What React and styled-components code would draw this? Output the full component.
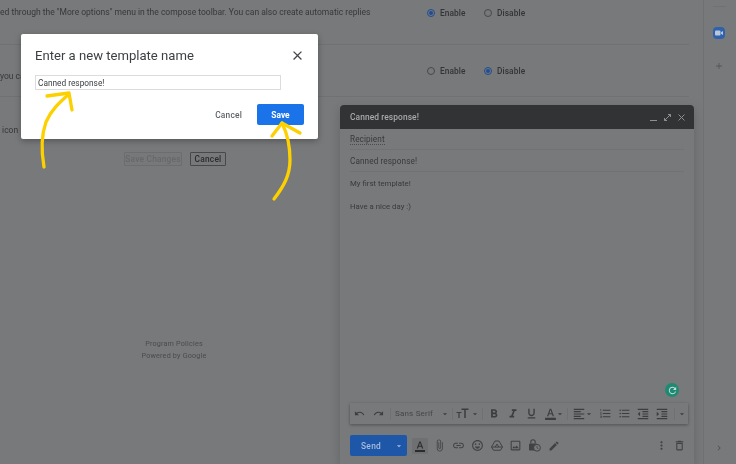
import React from "react";
import styled, { createGlobalStyle } from "styled-components";
import {
  MdUndo, MdRedo, MdArrowDropDown, MdFormatBold, MdFormatItalic, MdFormatUnderlined,
  MdFormatColorText, MdFormatAlignLeft, MdFormatListNumbered, MdFormatListBulleted,
  MdFormatIndentDecrease, MdFormatIndentIncrease, MdAttachFile, MdInsertLink,
  MdOutlineEmojiEmotions, MdOutlineImage,
  MdEdit, MdMoreVert, MdOutlineDelete, MdClose, MdAdd, MdChevronRight,
  MdRefresh,
} from "react-icons/md";

const Global = createGlobalStyle`
  html, body { margin: 0; padding: 0; background: #78797b; }
  * { box-sizing: border-box; }
  body { font-family: Roboto, "Liberation Sans", sans-serif; overflow: hidden; }
`;

const Page = styled.div`
  position: relative; width: 736px; height: 464px; display: flex; overflow: hidden;
  background: #78797b; color: #333436; filter: blur(0.35px);
`;
const Main = styled.main`
  width: 703px; display: flex; flex-direction: column; padding-right: 14px;
`;
const SettingRow = styled.div`
  height: ${(p) => p.$h}px; padding-top: ${(p) => p.$top}px; display: flex; align-items: flex-start;
  border-bottom: ${(p) => (p.$last ? "none" : "1px solid #707173")};
  flex: none;
`;
const Desc = styled.div`
  width: 369px; flex: none; margin-top: ${(p) => p.$dy || 0}px;
  font-size: 8.5px; line-height: 12px; white-space: nowrap; color: #37383a;
`;
const Radios = styled.div`
  margin-left: 58px; margin-top: ${(p) => p.$dy || 0}px; display: flex; align-items: center; height: 12px;
`;
const RadioItem = styled.label`
  width: 57px; display: flex; align-items: center; gap: 5px;
  font-size: 8.3px; font-weight: 500; color: #333436; letter-spacing: .1px;
`;
const Dot = styled.span`
  width: 8px; height: 8px; border-radius: 50%; flex: none; display: flex; align-items: center; justify-content: center;
  border: 1px solid ${(p) => (p.$on ? "#1d4d94" : "#47484a")};
  &::after { content: ""; width: 4px; height: 4px; border-radius: 50%; background: ${(p) => (p.$on ? "#1d4d94" : "transparent")}; }
`;
const Actions = styled.div`
  display: flex; gap: 8px; padding-left: 124px; margin-top: 5px;
`;
const GhostButton = styled.button`
  font: 500 8.4px Roboto, sans-serif; height: 14px; padding: 0; letter-spacing: .2px;
  width: ${(p) => p.$w}px; border-radius: 1px;
  background: #77787a;
  color: ${(p) => (p.$off ? "#67686a" : "#2a2b2d")};
  border: 1px solid ${(p) => (p.$off ? "#6c6d6f" : "#47484a")};
`;
const Footer = styled.footer`
  width: 348px; margin-top: 172px; text-align: center; font-size: 7.2px; line-height: 12px; letter-spacing: .2px; color: #4a4b4d;
`;
const Sidebar = styled.aside`
  flex: 1; border-left: 1px solid #707173; display: flex; flex-direction: column; align-items: center; padding-right: 2px;
  color: #505153;
`;
const SideRule = styled.div`width: 13px; height: 1px; background: #707173; margin-top: 6px;`;
const ZoomBadge = styled.div`
  width: 12px; height: 12px; margin-top: 20px; border-radius: 4px; background: #2f62ad;
  display: flex; align-items: center; justify-content: center;
`;
const SidePlus = styled.div`margin-top: 22px; display: flex; font-size: 10px; color: #55565a;`;
const SideChevron = styled.div`margin-top: auto; margin-bottom: 11px; display: flex; font-size: 10px; padding-right: 1px;`;

const Compose = styled.section`
  position: absolute; left: 340px; top: 105px; width: 354px; height: 359px;
  display: flex; flex-direction: column; background: #78797b;
  box-shadow: 0 4px 10px rgba(0,0,0,.18);
`;
const ComposeHeader = styled.header`
  height: 24px; flex: none; background: #323335; border-radius: 4px 4px 0 0; padding: 0 8px 0 10px;
  display: flex; align-items: center; justify-content: space-between; color: #a9aaab;
  font-size: 8.4px; font-weight: 500; letter-spacing: .1px;
`;
const HeaderIcons = styled.div`display: flex; align-items: center; gap: 5px; font-size: 9px;`;
const HeaderGlyph = styled.svg`width: 9px; height: 9px; display: block; stroke: #8e8f90; fill: none; stroke-width: 1;`;
const Field = styled.div`
  margin: 0 10px; height: ${(p) => p.$h}px; flex: none; display: flex; align-items: center;
  border-bottom: 1px solid #717274; font-size: 8.2px; color: #38393b; letter-spacing: .1px;
`;
const Recipient = styled.span`border-bottom: 1px dotted #4a4b4d; line-height: 10px;`;
const Body = styled.div`
  position: relative; flex: 1; padding: 0 10px; font-size: 7.8px; line-height: 23px; color: #38393b;
`;
const Grammarly = styled.div`
  position: absolute; left: 325px; top: 211px; width: 14px; height: 14px; border-radius: 50%; background: #1f8a73;
  display: flex; align-items: center; justify-content: center; color: #c9dcd6; font-size: 11px;
`;
const FormatBar = styled.div`
  margin: 0 6px 0 10px; height: 21px; flex: none; display: flex; align-items: center;
  background: #78797b; box-shadow: 0 1px 3px rgba(0,0,0,.35); color: #3c3d3f; font-size: 11px;
`;
const Ico = styled.span`
  width: ${(p) => p.$w || 19}px; flex: none; display: flex; align-items: center; justify-content: center;
  font-size: ${(p) => p.$s || 11}px; line-height: 0; margin-left: ${(p) => p.$ml || 0}px;
`;
const Caret = styled(MdArrowDropDown)`font-size: 10px; margin-left: ${(p) => p.$ml ?? -1}px; flex: none;`;
const Sep = styled.span`width: 1px; height: 12px; background: #707173; flex: none; margin: 0 1px 0 2px;`;
const FontName = styled.span`
  width: 49px; flex: none; font-size: 8px; letter-spacing: .2px; color: #454648; padding-left: 3px; white-space: nowrap;
`;
const ActionBar = styled.div`
  height: 21px; margin: 11px 7px 8px 10px; flex: none; display: flex; align-items: center; color: #414244;
`;
const SendBtn = styled.div`
  width: 57px; height: 21px; flex: none; border-radius: 2px; background: #1f57a8; color: #a6bcdd;
  font: 500 8.4px Roboto, sans-serif; letter-spacing: .3px; display: flex; align-items: center; padding-left: 11px;
  justify-content: space-between; padding-right: 3px; margin-right: 5px;
`;
const ActiveIco = styled(Ico)`
  width: 16px; height: 16px; background: #6f7072; border-radius: 1px; margin-right: 2px; color: #2a2b2d;
`;
const Spacer = styled.span`flex: 1;`;

const Dialog = styled.div`
  position: absolute; left: 21px; top: 34px; width: 297px; height: 105px; background: #fff; border-radius: 2px;
  padding: 13px 14px 0; box-shadow: 0 2px 6px rgba(0,0,0,.3); display: flex; flex-direction: column;
`;
const TitleRow = styled.div`display: flex; justify-content: space-between; align-items: center; height: 16px; margin-bottom: 12px; color: #44474a;`;
const Title = styled.h2`
  margin: 0; font: 400 13.1px Roboto, sans-serif; color: #3c4043;
`;
const CloseBtn = styled.span`display: flex; font-size: 15px; margin-right: -1px;`;
const NameInput = styled.input`
  width: 246px; height: 15px; border: 1px solid #dadce0; padding: 0 2px; outline: none;
  font: 400 8.3px Roboto, sans-serif; color: #3c4043;
`;
const DialogActions = styled.div`
  display: flex; justify-content: flex-end; align-items: center; margin-top: 14px; gap: 15px;
`;
const TextBtn = styled.span`font: 500 8.4px Roboto, sans-serif; color: #5f6368; letter-spacing: .2px;`;
const SaveBtn = styled.span`
  width: 47px; height: 21px; background: #1a73e8; border-radius: 2px; color: #fff;
  font: 700 8.4px Roboto, sans-serif; display: flex; align-items: center; justify-content: center;
`;
const Arrows = styled.svg`
  position: absolute; left: 0; top: 0; width: 736px; height: 464px; pointer-events: none;
  fill: none; stroke: #fdd000; stroke-width: 3.3; stroke-linecap: round; stroke-linejoin: round;
`;

const RadioPair = ({ on, dy }) => (
  <Radios $dy={dy}>
    <RadioItem><Dot $on={on === 0} />Enable</RadioItem>
    <RadioItem><Dot $on={on === 1} />Disable</RadioItem>
  </Radios>
);

const TextSizeIcon = () => (
  <svg width="13" height="11" viewBox="0 0 13 11" fill="none" stroke="currentColor">
    <path d="M0.5 4.5h5M3 4.5V10" strokeWidth="1.2" />
    <path d="M5.5 1.3h7M9 1.3V10" strokeWidth="1.5" />
  </svg>
);

const DriveIcon = () => (
  <svg width="12" height="11" viewBox="0 0 24 22" fill="none" stroke="currentColor" strokeWidth="2" strokeLinejoin="round">
    <path d="M8 2h8l7 12-4 6.5H5L1 14z" />
    <path d="M12 8l3.6 6.2H8.4z" />
    <path d="M1 14h7.4M15.6 14H23" />
  </svg>
);

const LockClockIcon = () => (
  <svg width="13" height="13" viewBox="0 0 13 13" fill="none">
    <path d="M2.8 4.5V3a2.2 2.2 0 0 1 4.4 0v1.5" stroke="currentColor" strokeWidth="1.1" />
    <rect x="1" y="4.5" width="8" height="7" rx=".8" fill="currentColor" />
    <circle cx="9" cy="8.8" r="3.4" fill="#78797b" stroke="currentColor" strokeWidth="1" />
    <path d="M9 7v2l1.3.8" stroke="currentColor" strokeWidth=".8" />
  </svg>
);

export default function App() {
  return (
    <Page>
      <Global />
      <Main>
        <SettingRow $h={45} $top={6}>
          <Desc>ed through the "More options" menu in the compose toolbar. You can also create automatic replies</Desc>
          <RadioPair on={0} dy={1} />
        </SettingRow>
        <SettingRow $h={52} $top={20}>
          <Desc $dy={5}>you can</Desc>
          <RadioPair on={1} />
        </SettingRow>
        <SettingRow $h={50} $top={26} $last>
          <Desc $dy={1}>&nbsp;icon</Desc>
        </SettingRow>
        <Actions>
          <GhostButton $off $w={58}>Save Changes</GhostButton>
          <GhostButton $w={36}>Cancel</GhostButton>
        </Actions>
        <Footer>
          <div>Program Policies</div>
          <div>Powered by Google</div>
        </Footer>
      </Main>
      <Sidebar>
        <SideRule />
        <ZoomBadge>
          <svg width="8" height="6" viewBox="0 0 8 6"><rect width="5.5" height="5" y=".5" rx="1" fill="#bcc6d8" /><path d="M6 2.2 8 1v4L6 3.8z" fill="#bcc6d8" /></svg>
        </ZoomBadge>
        <SidePlus><MdAdd /></SidePlus>
        <SideChevron><MdChevronRight /></SideChevron>
      </Sidebar>

      <Compose>
        <ComposeHeader>
          Canned response!
          <HeaderIcons>
            <HeaderGlyph viewBox="0 0 9 9"><path d="M1 7.5h7" /></HeaderGlyph>
            <HeaderGlyph viewBox="0 0 9 9"><path d="M1.5 7.5 7.5 1.5M5 1.5h2.5V4M1.5 5v2.5H4" /></HeaderGlyph>
            <HeaderGlyph viewBox="0 0 9 9"><path d="M1.5 1.5l6 6M7.5 1.5l-6 6" /></HeaderGlyph>
          </HeaderIcons>
        </ComposeHeader>
        <Field $h={21}><Recipient>Recipient</Recipient></Field>
        <Field $h={22}>Canned response!</Field>
        <Body>
          <div>My first template!</div>
          <div>Have a nice day :)</div>
          <Grammarly><MdRefresh /></Grammarly>
        </Body>
        <FormatBar>
          <Ico $s={11}><MdUndo /></Ico>
          <Ico $s={11}><MdRedo /></Ico>
          <Sep />
          <FontName>Sans Serif</FontName>
          <Caret />
          <Sep />
          <Ico $w={17}><TextSizeIcon /></Ico>
          <Caret />
          <Sep />
          <Ico $s={14}><MdFormatBold /></Ico>
          <Ico $s={14}><MdFormatItalic /></Ico>
          <Ico $s={13}><MdFormatUnderlined /></Ico>
          <Ico $w={18} $s={13}><MdFormatColorText /></Ico>
          <Caret $ml={-4} />
          <Sep />
          <Ico $w={20} $s={14}><MdFormatAlignLeft /></Ico>
          <Caret $ml={-5} />
          <Ico $s={13} $ml={1.5}><MdFormatListNumbered /></Ico>
          <Ico $s={13}><MdFormatListBulleted /></Ico>
          <Ico $s={14}><MdFormatIndentDecrease /></Ico>
          <Ico $s={14}><MdFormatIndentIncrease /></Ico>
          <Sep />
          <Caret $ml={1.5} />
        </FormatBar>
        <ActionBar>
          <SendBtn>Send<Caret /></SendBtn>
          <ActiveIco $s={12}><MdFormatColorText /></ActiveIco>
          <Ico $s={13}><MdAttachFile /></Ico>
          <Ico $s={13}><MdInsertLink /></Ico>
          <Ico $s={13}><MdOutlineEmojiEmotions /></Ico>
          <Ico><DriveIcon /></Ico>
          <Ico $s={13}><MdOutlineImage /></Ico>
          <Ico><LockClockIcon /></Ico>
          <Ico $s={12}><MdEdit /></Ico>
          <Spacer />
          <Ico $s={13}><MdMoreVert /></Ico>
          <Ico $s={13} $w={16}><MdOutlineDelete /></Ico>
        </ActionBar>
      </Compose>

      <Dialog>
        <TitleRow>
          <Title>Enter a new template name</Title>
          <CloseBtn><MdClose /></CloseBtn>
        </TitleRow>
        <NameInput readOnly value="Canned response!" />
        <DialogActions>
          <TextBtn>Cancel</TextBtn>
          <SaveBtn>Save</SaveBtn>
        </DialogActions>
      </Dialog>

      <Arrows viewBox="0 0 736 464">
        <path d="M44 167C41 150 41 136 46 122C51 110 60 102 68 95" />
        <path d="M47 96L69 93L72 110" />
        <path d="M274 199C284 186 290 175 290 160C290 145 287 133 282 123" />
        <path d="M272 136L282 123L300 133" />
      </Arrows>
    </Page>
  );
}
